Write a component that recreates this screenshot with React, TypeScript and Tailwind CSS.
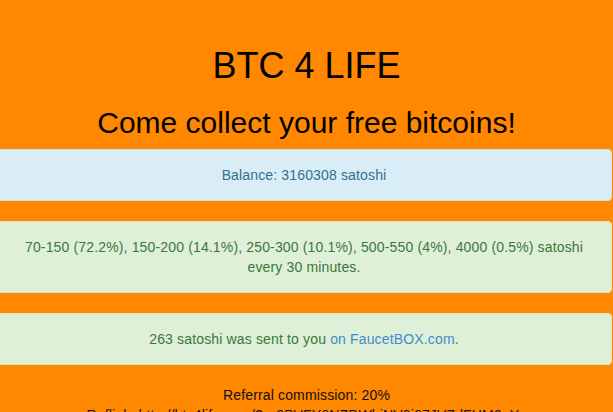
export default function App() {
    return (
        <div className="min-h-[412px] bg-[#ff8800] pt-[46px] text-center font-['Liberation_Sans',Arial,sans-serif] text-sm leading-5 text-[#111] overflow-hidden">
            {/* Header */}
            <h1 className="m-0 text-[36px] leading-[1.1] font-normal text-black">BTC 4 LIFE</h1>
            <h2 className="mt-5 mb-[10px] text-[30px] leading-[1.1] font-normal text-black">Come collect your free bitcoins!</h2>

            {/* Alerts */}
            <div className="-ml-[4px] mr-[1px] tracking-[0.15px]">
                <div className="mb-5 rounded border border-[#bce8f1] bg-[#d9edf7] p-[15px] text-[#31708f]">
                    Balance: 3160308 satoshi
                </div>
                <div className="mb-5 rounded border border-[#d6e9c6] bg-[#dff0d8] p-[15px] text-[#3c763d]">
                    70-150 (72.2%), 150-200 (14.1%), 250-300 (10.1%), 500-550 (4%), 4000 (0.5%) satoshi every 30 minutes.
                </div>
                <div className="mb-5 rounded border border-[#d6e9c6] bg-[#dff0d8] p-[15px] text-[#3c763d]">
                    263 satoshi was sent to you <a href="#" className="text-[#428bca]">on FaucetBOX.com</a>.
                </div>
            </div>

            {/* Referral */}
            <p className="m-0 tracking-[0.15px]">Referral commission: 20%</p>
            <p className="m-0 tracking-[0.15px]">Reflink: http://btc4life.com/?r=3PVFY6NZDWbiNV9i67JVZdFHM9nYx</p>
        </div>
    )
}
